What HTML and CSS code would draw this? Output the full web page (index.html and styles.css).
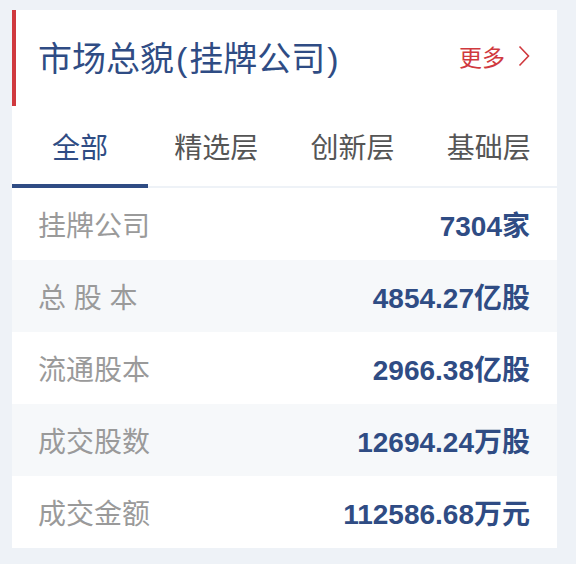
FILE: index.html
```html
<!DOCTYPE html>
<html lang="zh-CN">
<head>
<meta charset="utf-8">
<link rel="stylesheet" href="styles.css">
</head>
<body>
<div class="card">
  <div class="header">
    <h1 class="title">市场总貌<span class="paren">(</span>挂牌公司<span class="paren">)</span></h1>
    <a class="more">更多<svg class="chev" width="12" height="22" viewBox="0 0 12 22"><path d="M1.5 1.5 L10.5 11 L1.5 20.5" fill="none" stroke="#d0393e" stroke-width="1.6"/></svg></a>
  </div>
  <div class="tabs">
    <div class="tab active">全部</div>
    <div class="tab">精选层</div>
    <div class="tab">创新层</div>
    <div class="tab">基础层</div>
  </div>
  <div class="rows">
    <div class="row"><span class="label">挂牌公司</span><span class="value">7304家</span></div>
    <div class="row alt"><span class="label">总 股 本</span><span class="value">4854.27亿股</span></div>
    <div class="row"><span class="label">流通股本</span><span class="value">2966.38亿股</span></div>
    <div class="row alt"><span class="label">成交股数</span><span class="value">12694.24万股</span></div>
    <div class="row"><span class="label">成交金额</span><span class="value">112586.68万元</span></div>
  </div>
</div>
</body>
</html>
```

FILE: styles.css
```css
html, body {
  margin: 0;
  padding: 0;
}
body {
  background: #eef2f7;
  width: 576px;
  height: 564px;
  padding: 10px 0 0 12px;
  box-sizing: border-box;
  font-family: "Liberation Sans", "Noto Sans CJK SC", sans-serif;
}
.card {
  width: 545px;
  background: #ffffff;
}
.header {
  height: 96px;
  border-left: 4px solid #d0393e;
  display: flex;
  align-items: center;
  justify-content: space-between;
  padding: 0 27px 4px 22px;
  box-sizing: border-box;
}
.title {
  margin: 0;
  font-weight: normal;
  font-size: 34px;
  color: #2f4c84;
  letter-spacing: 0;
}
.paren {
  padding: 0 2px;
}
.more {
  display: flex;
  align-items: center;
  gap: 13px;
  font-size: 23px;
  color: #d0393e;
}
.chev {
  display: block;
}
.tabs {
  display: grid;
  grid-template-columns: repeat(4, 1fr);
  height: 82px;
  border-bottom: 2px solid #eef2f7;
  box-sizing: border-box;
}
.tab {
  display: flex;
  align-items: center;
  justify-content: center;
  font-size: 28px;
  color: #555555;
}
.tab.active {
  color: #2f4c84;
  border-bottom: 4px solid #2f4c84;
  margin-bottom: -2px;
  padding-top: 2px;
}
.row {
  height: 72px;
  display: flex;
  align-items: center;
  justify-content: space-between;
  padding: 0 27px 0 26px;
}
.row.alt {
  background: #f6f8fa;
}
.label {
  font-size: 28px;
  color: #9a9a9a;
}
.value {
  font-size: 28px;
  font-weight: bold;
  color: #2f4c84;
}
```
